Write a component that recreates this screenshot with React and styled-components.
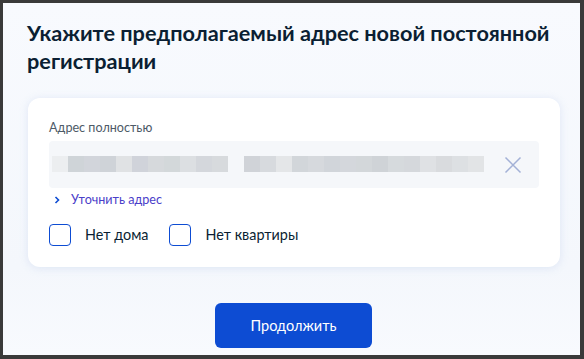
import React from 'react';
import styled, { createGlobalStyle } from 'styled-components';

const GlobalStyle = createGlobalStyle`
  html, body {
    margin: 0;
    padding: 0;
    background: #3a3a3a;
  }
  * {
    box-sizing: border-box;
  }
`;

// pixel mosaic of the hidden address
const mosaic = [
  '#eceef0', '#cfd4d8', '#d2d5db', '#cfd3d8', '#e0e2e4', '#d0d3da', '#d6d9dc', '#d3d8da',
  '#dcdfe2', '#d4d7dc', '#d7dadd', null, '#d0d3d8', '#d7dade', '#e4e6e8', '#d2d6da',
  '#d6d9dd', '#d1d5da', '#d4d7dc', '#d3d7da', '#cfd3d7', '#d6dadd', '#d5d8dc', '#dfe1e4',
  '#d9dbde', '#dde0e3', '#e2e4e6',
];

const App = () => (
  <Frame>
    <GlobalStyle />
    <Title>Укажите предполагаемый адрес новой постоянной регистрации</Title>
    <Card>
      <Label>Адрес полностью</Label>
      <Input>
        <Mosaic>
          {mosaic.map((c, i) => (
            <Cell key={i} style={{ background: c || 'transparent' }} />
          ))}
        </Mosaic>
        <ClearButton aria-label="Очистить">
          <svg width="18" height="18" viewBox="0 0 18 18">
            <path d="M1.5 1.5 L16.5 16.5 M16.5 1.5 L1.5 16.5" stroke="#a3b1d6" strokeWidth="1.5" fill="none" />
          </svg>
        </ClearButton>
      </Input>
      <LinkRow>
        <svg width="8" height="10" viewBox="0 0 8 10">
          <path d="M2.5 2 L5.5 5 L2.5 8" stroke="#0d4cd3" strokeWidth="1.6" fill="none" />
        </svg>
        <LinkText>Уточнить адрес</LinkText>
      </LinkRow>
      <Checks>
        <Check>
          <Box />
          Нет дома
        </Check>
        <Check>
          <Box />
          Нет квартиры
        </Check>
      </Checks>
    </Card>
    <Footer>
      <Button>Продолжить</Button>
    </Footer>
  </Frame>
);

export default App;

const Frame = styled.div`
  height: 359px;
  width: 584px;
  border-style: solid;
  border-color: #3a3a3a;
  border-width: 3px 4px 4px 3px;
  border-radius: 2px;
  background: linear-gradient(180deg, #f8fafe 0%, #f4f7fc 75%, #f8fafe 100%);
  padding: 16px 20px 0 24px;
  font-family: Lato, 'Noto Sans', sans-serif;
  color: #0b1f33;
`;

const Title = styled.h1`
  margin: 0 0 23px;
  font-size: 21.7px;
  line-height: 28px;
  font-weight: 700;
  color: #0b1f33;
`;

const Card = styled.div`
  margin: 0 0 0 1px;
  width: 532px;
  background: #fff;
  border-radius: 12px;
  box-shadow: 0 1px 8px rgba(168, 188, 228, 0.3);
  padding: 21px 21px 21px 21px;
`;

const Label = styled.div`
  font-size: 12.6px;
  line-height: 18px;
  color: #4d5a67;
  margin-bottom: 4px;
`;

const Input = styled.div`
  height: 47px;
  background: #f5f7fa;
  border-radius: 4px;
  display: flex;
  align-items: center;
  padding: 0 17px 0 3px;
`;

const Mosaic = styled.div`
  flex: 1;
  display: flex;
  height: 16px;
  margin-top: -2px;
`;

const Cell = styled.div`
  width: 16px;
  height: 16px;
  flex: none;
`;

const ClearButton = styled.div`
  width: 18px;
  height: 18px;
  display: flex;
  margin-left: 20px;
`;

const LinkRow = styled.div`
  display: flex;
  align-items: center;
  gap: 10px;
  margin-top: 4px;
  padding-left: 4px;
  height: 16px;
`;

const LinkText = styled.span`
  font-size: 12.6px;
  line-height: 16px;
  color: #4b40c9;
`;

const Checks = styled.div`
  display: flex;
  gap: 21px;
  margin-top: 16px;
`;

const Check = styled.label`
  display: flex;
  align-items: center;
  gap: 14px;
  font-size: 14.4px;
  line-height: 22px;
  color: #0b1f33;
`;

const Box = styled.span`
  width: 22px;
  height: 22px;
  border: 1.5px solid #0d4cd3;
  border-radius: 4px;
  background: #fff;
`;

const Footer = styled.div`
  display: flex;
  justify-content: center;
  margin-top: 36px;
`;

const Button = styled.button`
  width: 157px;
  height: 45px;
  border: none;
  border-radius: 6px;
  background: #0d4cd3;
  color: #fff;
  font-family: Lato, 'Noto Sans', sans-serif;
  font-size: 14.5px;
  cursor: pointer;
`;
